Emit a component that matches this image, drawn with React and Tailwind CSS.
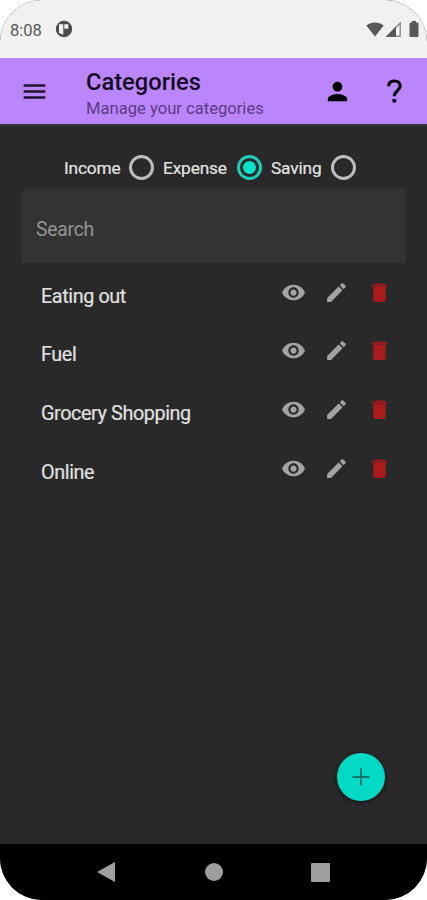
const categories = ["Eating out", "Fuel", "Grocery Shopping", "Online"];

function Icon({ d, className, children }) {
  return (
    <svg viewBox="0 0 24 24" fill="currentColor" className={className}>
      {d && <path d={d} />}
      {children}
    </svg>
  );
}

const EYE =
  "M12 4.5C7 4.5 2.73 7.61 1 12c1.73 4.39 6 7.5 11 7.5s9.27-3.11 11-7.5c-1.73-4.39-6-7.5-11-7.5zM12 17c-2.76 0-5-2.24-5-5s2.24-5 5-5 5 2.24 5 5-2.24 5-5 5zm0-8c-1.66 0-3 1.34-3 3s1.34 3 3 3 3-1.34 3-3-1.34-3-3-3z";
const PENCIL =
  "M3 17.25V21h3.75L17.81 9.94l-3.75-3.75L3 17.25zM20.71 7.04c.39-.39.39-1.02 0-1.41l-2.34-2.34c-.39-.39-1.02-.39-1.41 0l-1.83 1.83 3.75 3.75 1.83-1.83z";
const PERSON =
  "M12 12c2.21 0 4-1.79 4-4s-1.79-4-4-4-4 1.79-4 4 1.79 4 4 4zm0 2c-2.67 0-8 1.34-8 4v2h16v-2c0-2.66-5.33-4-8-4z";

function StatusBar() {
  return (
    <div className="flex h-[58px] shrink-0 items-center bg-[#f1f1f1] pl-[10px] pr-[8px] text-[#5a5a5a]">
      <span className="mt-[3px] w-[45px] text-[16.5px] leading-5">8:08</span>
      <svg viewBox="0 0 18 18" className="h-[18px] w-[18px]">
        <circle cx="9" cy="9" r="7.5" fill="#4c4c4c" stroke="#4c4c4c" strokeWidth="1.4" />
        <path d="M4 4.200h4.300v10.300c-2.300 0-4.300-1.700-4.300-1.700zM9.300 4.200h4v4.500h-4z" fill="#f1f1f1" />
      </svg>
      <div className="ml-auto flex items-center">
        <svg viewBox="0 0 18 15" className="h-[15px] w-[18px]">
          <path d="M.3 3.6C5.2-.4 12.8-.4 17.7 3.6L9 14.5z" fill="#585858" />
        </svg>
        <svg viewBox="0 0 15 15" className="ml-[2px] mt-px h-[15px] w-[15px]">
          <path d="M1.2 14.2H14.2V1z" fill="#f6f6f6" stroke="#8c8c8c" strokeWidth="1.4" />
          <path d="M0 14.8 10 4.500v10.300z" fill="#585858" />
        </svg>
        <svg viewBox="0 0 10 16" className="ml-[8px] h-4 w-[10px]">
          <path d="M3 0h4v1.5h1.5q1 0 1 1V15q0 1-1 1h-7q-1 0-1-1V2.500q0-1 1-1H3z" fill="#585858" />
        </svg>
      </div>
    </div>
  );
}

function Header() {
  return (
    <header className="flex h-[68px] shrink-0 items-center border-b-2 border-[#3a2f47] bg-[#bb86fc] pl-[19.5px] pr-[18px] text-black">
      <Icon className="h-[29px] w-[29px] text-[#21102f]" d="M3 18h18v-2H3v2zm0-5h18v-2H3v2zm0-7v2h18V6H3z" />
      <div className="ml-[37.500px] mt-[6px] whitespace-nowrap">
        <h1 className="text-[23.7px] font-medium leading-[28px] text-[#150b20]">Categories</h1>
        <p className="text-[16.6px] leading-[25px] text-[#5b3a83]">Manage your categories</p>
      </div>
      <Icon className="ml-auto h-[29px] w-[29px]" d={PERSON} />
      <svg viewBox="0 0 29 29" className="ml-[28px] h-[29px] w-[29px]" fill="none">
        <path d="M8.600 9.300C8.600 5.800 11 4 14.300 4s5.900 1.700 5.900 5c0 4-6 5.300-6 10.200" stroke="currentColor" strokeWidth="3.100" />
        <rect x="12.500" y="22" width="3.700" height="3.500" rx=".6" fill="currentColor" />
      </svg>
    </header>
  );
}

function Radio({ checked }) {
  return checked ? (
    <span className="flex h-[25px] w-[25px] items-center justify-center rounded-full border-[3px] border-[#1dcfb9]">
      <span className="h-[13px] w-[13px] rounded-full bg-[#03e5cb]" />
    </span>
  ) : (
    <span className="h-[25px] w-[25px] rounded-full border-[3px] border-[#bdbdbd]" />
  );
}

function Filters() {
  return (
    <div className="flex h-[25px] items-center whitespace-nowrap pl-[64px] text-[17.3px] tracking-[-0.15px] text-[#e4e4e4] [-webkit-text-stroke:0.2px]">
      <span className="mt-[2px] w-[65px]">Income</span>
      <Radio />
      <span className="ml-[9px] mt-[2px] w-[74px]">Expense</span>
      <Radio checked />
      <span className="ml-[9px] mt-[2px] w-[60px]">Saving</span>
      <Radio />
    </div>
  );
}

function CategoryRow({ name }) {
  return (
    <li className="flex h-[58.700px] items-start pl-[41px] pr-[35.500px]">
      <span className="mt-[5px] text-[19.8px] leading-6 tracking-[-0.4px] text-[#e0e0e0] [-webkit-text-stroke:0.2px]">
        {name}
      </span>
      <div className="ml-auto flex gap-[18px]">
        <Icon className="h-[25px] w-[25px] text-[#a3a3a3]" d={EYE} />
        <Icon className="h-[25px] w-[25px] text-[#a3a3a3]" d={PENCIL} />
        <Icon className="h-[25px] w-[25px] text-[#a81b1b]">
          <path d="M6 6.500h12V19c0 1.100-.9 2-2 2H8c-1.100 0-2-.9-2-2z" />
          <path d="M5 4h3.500l1-1h5l1 1H19v2.500H5z" fill="#961d1d" />
        </Icon>
      </div>
    </li>
  );
}

function NavBar() {
  return (
    <nav className="flex h-[56px] shrink-0 items-center bg-black pl-[97px] text-[#9e9e9e]">
      <svg viewBox="0 0 18 20" className="h-5 w-[18px]">
        <path d="M0 10 18 0v20z" fill="currentColor" />
      </svg>
      <span className="ml-[90px] h-[18px] w-[18px] rounded-full bg-[#9e9e9e]" />
      <span className="ml-[88px] h-[19px] w-[19px] rounded-[1px] bg-[#9e9e9e]" />
    </nav>
  );
}

export default function App() {
  return (
    <div className="h-[900px] w-[427px] bg-white font-['Roboto',sans-serif]">
      <div className="flex h-full flex-col overflow-hidden rounded-[42px] bg-[#292929]">
        <StatusBar />
        <Header />
        <main className="flex grow flex-col pt-[29px]">
          <Filters />
          <div className="ml-[22px] mr-[21px] mt-[9px] flex h-[74px] items-center rounded-[2px] bg-[#333] px-[14px] pt-[8px] text-[19.300px] tracking-[-0.2px] text-[#949494]">
            Search
          </div>
          <ul className="mt-[16.500px]">
            {categories.map((name) => (
              <CategoryRow key={name} name={name} />
            ))}
          </ul>
          <button className="mb-[43px] ml-auto mr-[42px] mt-auto flex h-[48px] w-[48px] items-center justify-center rounded-full bg-[#03dac5] shadow-[0_1px_4px_rgba(0,0,0,0.7)]">
            <svg viewBox="0 0 18 18" className="h-[18px] w-[18px]">
              <path d="M9 .5v17M.5 9h17" stroke="#08786d" strokeWidth="2" />
            </svg>
          </button>
        </main>
        <NavBar />
      </div>
    </div>
  );
}
